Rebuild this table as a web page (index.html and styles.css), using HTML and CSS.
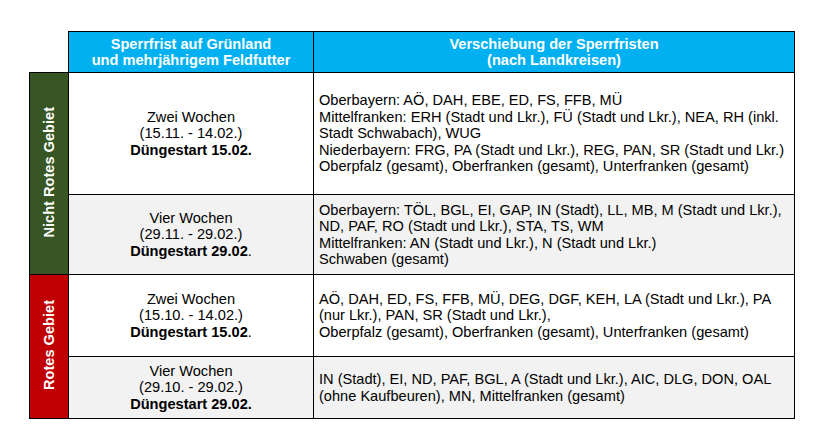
FILE: index.html
```html
<!DOCTYPE html>
<html lang="de">
<head>
<meta charset="utf-8">
<title>Sperrfristen</title>
<link rel="stylesheet" href="styles.css">
</head>
<body>
<table class="sf">
  <colgroup>
    <col class="c-label">
    <col class="c-left">
    <col class="c-right">
  </colgroup>
  <thead>
    <tr class="head">
      <th class="corner"></th>
      <th class="hd">Sperrfrist auf Grünland<br>und mehrjährigem Feldfutter</th>
      <th class="hd">Verschiebung der Sperrfristen<br>(nach Landkreisen)</th>
    </tr>
  </thead>
  <tbody>
    <tr class="r1">
      <th class="lab green" rowspan="2"><span class="vt">Nicht Rotes Gebiet</span></th>
      <td class="mid">Zwei Wochen<br>(15.11. - 14.02.)<br><b>Düngestart 15.02.</b></td>
      <td class="txt">Oberbayern: AÖ, DAH, EBE, ED, FS, FFB, MÜ<br>Mittelfranken: ERH (Stadt und Lkr.), FÜ (Stadt und Lkr.), NEA, RH (inkl. Stadt Schwabach), WUG<br>Niederbayern: FRG, PA (Stadt und Lkr.), REG, PAN, SR (Stadt und Lkr.)<br>Oberpfalz (gesamt), Oberfranken (gesamt), Unterfranken (gesamt)</td>
    </tr>
    <tr class="r2 grey">
      <td class="mid">Vier Wochen<br>(29.11. - 29.02.)<br><b>Düngestart 29.02</b>.</td>
      <td class="txt">Oberbayern: TÖL, BGL, EI, GAP, IN (Stadt), LL, MB, M (Stadt und Lkr.), ND, PAF, RO (Stadt und Lkr.), STA, TS, WM<br>Mittelfranken: AN (Stadt und Lkr.), N (Stadt und Lkr.)<br>Schwaben (gesamt)</td>
    </tr>
    <tr class="r3">
      <th class="lab red" rowspan="2"><span class="vt">Rotes Gebiet</span></th>
      <td class="mid">Zwei Wochen<br>(15.10. - 14.02.)<br><b>Düngestart 15.02</b>.</td>
      <td class="txt">AÖ, DAH, ED, FS, FFB, MÜ, DEG, DGF, KEH, LA (Stadt und Lkr.), PA (nur Lkr.), PAN, SR (Stadt und Lkr.),<br>Oberpfalz (gesamt), Oberfranken (gesamt), Unterfranken (gesamt)</td>
    </tr>
    <tr class="r4 grey">
      <td class="mid">Vier Wochen<br>(29.10. - 29.02.)<br><b>Düngestart 29.02.</b></td>
      <td class="txt">IN (Stadt), EI, ND, PAF, BGL, A (Stadt und Lkr.), AIC, DLG, DON, OAL (ohne Kaufbeuren), MN, Mittelfranken (gesamt)</td>
    </tr>
  </tbody>
</table>
</body>
</html>
```
FILE: styles.css
```css
html, body {
  margin: 0;
  background: #ffffff;
}
body {
  padding: 31px 0 0 29px;
  font-family: "Liberation Sans", Arial, sans-serif;
  font-size: 14.6px;
  color: #000;
}
.sf {
  border-collapse: collapse;
  table-layout: fixed;
  width: 765px;
}
.c-label { width: 39px; }
.c-left { width: 245px; }
.c-right { width: 481px; }
.sf th, .sf td {
  padding: 0;
  border: 1px solid #000;
}
.sf .corner {
  border: none;
  border-right: 1px solid #000;
  border-bottom: 1px solid #000;
}
.head { height: 41px; }
.sf .hd {
  background: #00b0f0;
  color: #fff;
  font-weight: bold;
  font-size: 14.6px;
  line-height: 16.5px;
  text-align: center;
  vertical-align: middle;
}
.sf .lab {
  color: #fff;
  font-weight: bold;
  font-size: 14.6px;
  vertical-align: middle;
  text-align: center;
}
.green { background: #375623; }
.red { background: #c00000; }
.vt {
  display: inline-block;
  writing-mode: vertical-rl;
  transform: rotate(180deg);
  white-space: nowrap;
}
.sf .mid {
  text-align: center;
  vertical-align: middle;
  line-height: 16.5px;
}
.sf .txt {
  text-align: left;
  vertical-align: middle;
  line-height: 16.5px;
  padding: 0 3px 0 5px;
}
.grey td { background: #f2f2f2; }
.r1 { height: 122px; }
.r2 { height: 80px; }
.r3 { height: 82px; }
.r4 { height: 62px; }
```
